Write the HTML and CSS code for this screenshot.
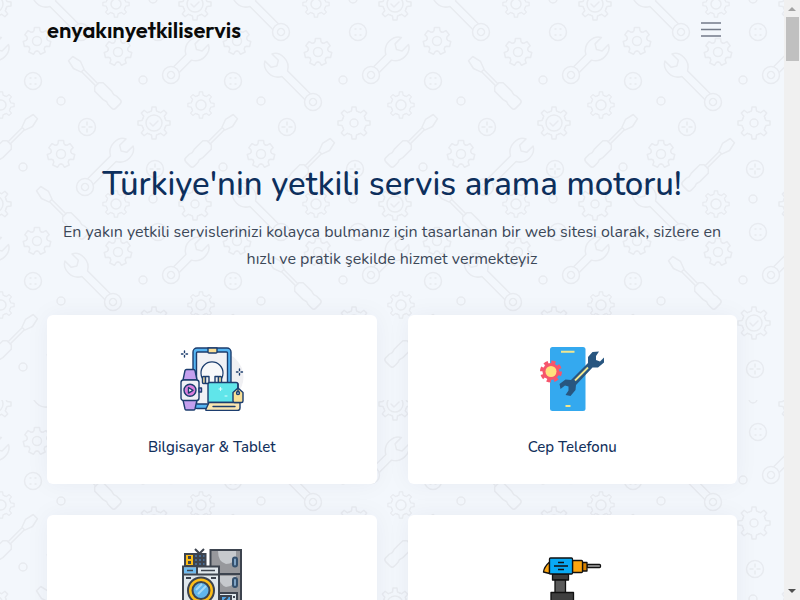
FILE: index.html
```
<!DOCTYPE html>
<html lang="tr">

<head>
    <meta charset="UTF-8">
    <meta name="viewport" content="width=device-width, initial-scale=1.0">
    <title>enyakınyetkiliservis</title>
    <link rel="stylesheet" href="styles.css">
</head>

<body>
    <div class="page">
        <!-- Repeating tools pattern -->
        <svg class="pattern" aria-hidden="true">
            <defs>
                <path id="tooth8" d="M-4.6-11.1L-2.5-12L-2-16H2L2.5-12L4.6-11.1" />
                <path id="tooth7" d="M-4.3-9L-3-10.3L-2.6-13.5H2.6L3-10.3L4.3-9" />
                <g id="gear8">
                    <use href="#tooth8" />
                    <use href="#tooth8" transform="rotate(45)" />
                    <use href="#tooth8" transform="rotate(90)" />
                    <use href="#tooth8" transform="rotate(135)" />
                    <use href="#tooth8" transform="rotate(180)" />
                    <use href="#tooth8" transform="rotate(225)" />
                    <use href="#tooth8" transform="rotate(270)" />
                    <use href="#tooth8" transform="rotate(315)" />
                </g>
                <g id="gear7">
                    <use href="#tooth7" />
                    <use href="#tooth7" transform="rotate(51.43)" />
                    <use href="#tooth7" transform="rotate(102.86)" />
                    <use href="#tooth7" transform="rotate(154.29)" />
                    <use href="#tooth7" transform="rotate(205.71)" />
                    <use href="#tooth7" transform="rotate(257.14)" />
                    <use href="#tooth7" transform="rotate(308.57)" />
                    <circle r="4.5" />
                </g>
                <g id="gearCheck">
                    <use href="#gear8" />
                    <circle r="8" />
                    <path d="M-4 0L-1 3L4-2" />
                </g>
                <g id="gearPlain">
                    <use href="#gear8" />
                    <circle r="4" />
                </g>
                <g id="gearSmall">
                    <use href="#gear8" transform="scale(.82)" />
                    <circle r="5" />
                </g>
                <g id="button">
                    <circle r="8.5" />
                    <path d="M-3-3h1M2-3h1M-3 3h1M2 3h1" />
                </g>
                <g id="screw">
                    <circle r="8.5" />
                    <path d="M0-5v3M0 5v-3M-5 0h3M5 0h-3" />
                </g>
                <g id="wrench">
                    <circle r="8.5" />
                    <circle r="3.5" />
                    <path d="M-4-8V-40Q-11-44-11-52Q-11-60-5-63V-54L0-51L5-54V-63Q11-60 11-52Q11-44 4-40V-8" />
                </g>
                <g id="wrenchShort">
                    <circle r="8.5" />
                    <circle r="3.5" />
                    <path d="M-4-8V-25Q-11-29-11-37Q-11-45-5-48V-39L0-36L5-39V-48Q11-45 11-37Q11-29 4-25V-8" />
                </g>
                <g id="driver">
                    <path d="M-6-3Q-6 0-3 0H3Q6 0 6-3V-8L5-11L6-15V-27L3-30H-3L-6-27V-15L-5-11L-6-8Z" />
                    <path d="M-1.5-30V-50M1.5-30V-50M-2-50L-5-58L-3-67H3L5-58L2-50Z" />
                </g>
                <g id="cell">
                    <use href="#gear7" x="37" y="41" />
                    <use href="#gear7" x="118" y="52" />
                    <use href="#gear7" x="61" y="154" />
                    <use href="#gearSmall" x="116" y="4" />
                    <use href="#gearSmall" x="201" y="105" />
                    <use href="#button" x="33" y="81" />
                    <use href="#button" x="158" y="32" />
                    <use href="#screw" x="87" y="127" />
                    <use href="#screw" x="155" y="169" />
                    <circle cx="61" cy="101" r="4" />
                    <circle cx="143" cy="80" r="4" />
                    <circle cx="23" cy="167" r="4" />
                    <circle cx="153" cy="-1" r="4" />
                    <use href="#wrenchShort" transform="translate(171 75) rotate(45)" />
                    <use href="#driver" transform="translate(188 164) rotate(45)" />
                </g>
                <g id="cellA">
                    <use href="#cell" />
                    <use href="#gearCheck" x="154" y="123" />
                    <use href="#driver" transform="translate(118 106) rotate(-45)" />
                    <use href="#wrench" transform="translate(85 187) rotate(45)" />
                </g>
                <g id="cellB">
                    <use href="#cell" />
                    <use href="#gearPlain" x="154" y="123" />
                    <use href="#wrench" transform="translate(113 102) rotate(-45)" />
                    <use href="#driver" transform="translate(85 188) rotate(45)" />
                </g>
                <pattern id="tools" width="400" height="400" patternUnits="userSpaceOnUse">
                    <g class="tool-lines">
                        <use href="#cellA" x="-200" y="-200" />
                        <use href="#cellB" x="0" y="-200" />
                        <use href="#cellA" x="200" y="-200" />
                        <use href="#cellB" x="-200" y="0" />
                        <use href="#cellA" x="0" y="0" />
                        <use href="#cellB" x="200" y="0" />
                        <use href="#cellA" x="-200" y="200" />
                        <use href="#cellB" x="0" y="200" />
                        <use href="#cellA" x="200" y="200" />
                        <use href="#gearCheck" x="-5" y="4" />
                        <use href="#gearCheck" x="195" y="4" />
                        <use href="#gearCheck" x="395" y="4" />
                        <use href="#gearCheck" x="-5" y="204" />
                        <use href="#gearPlain" x="195" y="204" />
                        <use href="#gearCheck" x="395" y="204" />
                        <use href="#wrench" transform="translate(81 32) rotate(-45)" />
                        <use href="#wrench" transform="translate(281 32) rotate(-45)" />
                        <use href="#driver" transform="translate(86 236) rotate(-45)" />
                        <use href="#wrench" transform="translate(281 232) rotate(-45)" />
                    </g>
                </pattern>
            </defs>
            <rect width="100%" height="100%" fill="url(#tools)" />
        </svg>

        <header class="header">
            <a href="/" class="logo">enyakınyetkiliservis</a>
            <button class="menu-btn" type="button" aria-label="Menü">
                <svg width="20" height="16" viewBox="0 0 20 16">
                    <path d="M0 1h20M0 7.5h20M0 14h20" />
                </svg>
            </button>
        </header>

        <main>
            <section class="hero">
                <h1>Türkiye'nin yetkili servis arama motoru!</h1>
                <p>En yakın yetkili servislerinizi kolayca bulmanız için tasarlanan bir web sitesi olarak, sizlere en
                    hızlı ve pratik şekilde hizmet vermekteyiz</p>
            </section>

            <section class="cards">
                <a href="#bilgisayar" class="card">
                    <svg class="card-icon" viewBox="0 0 64 64" fill="none" stroke="#1c3d6e" stroke-width="1.4" stroke-linejoin="round" stroke-linecap="round">
                        <circle cx="39" cy="30" r="24.5" fill="#f0f0f3" stroke="none" />
                        <rect x="13" y="1" width="38" height="60.5" rx="4" fill="#55b4f2" />
                        <rect x="16.5" y="5" width="31" height="52" rx="1" fill="#f1f1f5" />
                        <path d="M28 1h9v4q0 1-1 1h-7q-1 0-1-1z" fill="#f9dd96" />
                        <path d="M24.500 34a11 11 0 1 1 15 0" fill="#f8f8fa" stroke-width="1.2" />
                        <rect x="22.5" y="29.5" width="3" height="7" rx="1" fill="#f9e3a5" />
                        <rect x="25.5" y="29.5" width="3.5" height="7" fill="#eee" />
                        <rect x="35" y="29.5" width="3.5" height="7" fill="#eee" />
                        <rect x="38.5" y="29.5" width="3" height="7" rx="1" fill="#f9e3a5" />
                        <path d="M3 33L5 23.5Q5.3 22.5 6.5 22.5H13.5Q14.7 22.5 15 23.5L17 33ZM3 53L5 62Q5.300 63 6.500 63H13.500Q14.700 63 15 62L17 53Z" fill="#c5a0ee" />
                        <rect x="1" y="33" width="18" height="20.5" rx="2.5" fill="#f0f0f6" />
                        <rect x="19" y="41" width="2.5" height="4" fill="#c5a0ee" />
                        <circle cx="10" cy="43.3" r="6" fill="#da7edd" />
                        <path d="M8.500 40.500v5.600l4.500-2.800z" fill="#fff" />
                        <path d="M28 55.500V37.500Q28 35.500 30 35.500H56Q58 35.500 58 37.500V55.500Z" fill="#60e5ea" />
                        <path d="M39 42h3M40.500 40.500v3M45 49h2" stroke="#d9ffff" stroke-width="1" />
                        <path d="M29 55.500H60V61Q60 63.500 57.500 63.500H26.500Q25.500 63.500 26 62Z" fill="#fae5b0" />
                        <path d="M33 59.5H55" />
                        <path d="M58 41l5 4.5V54q0 1.5-1.5 1.5h-7q-1.5 0-1.5-1.5V45.5z" fill="#fae096" />
                        <circle cx="58" cy="46" r="1.5" fill="#fff" />
                        <path d="M58 37v8" />
                        <path d="M4.500 4v1.500M4.500 8.500V10M1.500 7H3M6 7h1.500M59.500 22v1.500M59.500 26.500V28M56.500 25H58M61 25h1.500" />
                    </svg>
                    <span>Bilgisayar &amp; Tablet</span>
                </a>

                <a href="#cep-telefonu" class="card">
                    <svg class="card-icon" viewBox="0 0 64 64">
                        <rect x="10" y="0" width="35.5" height="64" rx="2.5" fill="#34a9ef" />
                        <path d="M21 4.800H34.500M25.500 59H30.500" stroke="#f2e78f" stroke-width="2" />
                        <circle cx="11" cy="24.5" r="8.5" fill="#f6566c" />
                        <circle cx="11" cy="24.5" r="9" fill="none" stroke="#f6566c" stroke-width="4" stroke-dasharray="4 3.07" />
                        <circle cx="11" cy="24.5" r="5.5" fill="#ffe07c" />
                        <path d="M52.500 5L59 4.500L56 9V13L60 14.500L64 10.500V15.500L58 20.500L52.500 20.500L36 38L35.500 43L30.500 49L25.500 48L28.500 43.500V39.500L25 38.500L20.500 42L19.500 37L25.500 32.500L31 33L48 16L48 10Z" fill="#285680" />
                        <path d="M35 33.5L48 20.5" stroke="#f2e78f" stroke-width="1.8" />
                    </svg>
                    <span>Cep Telefonu</span>
                </a>

                <a href="#beyaz-esya" class="card" aria-label="Beyaz Eşya">
                    <svg class="card-icon" viewBox="0 0 64 64" fill="none" stroke="#3d444f" stroke-width="2">
                        <rect x="30.5" y="3" width="30.5" height="65" fill="#97989c" />
                        <path d="M38 4H56V10Q54 17 46 17Q38 15 38 4ZM38 29H56Q55 40 46 40Q40 38 38 29Z" fill="#c6c9cd" stroke="none" />
                        <path d="M30.5 27H61" />
                        <rect x="53" y="10.5" width="4" height="9" rx="2" stroke="#34506d" fill="#7fa3c4" />
                        <rect x="53" y="31" width="4" height="9" rx="2" stroke="#34506d" fill="#7fa3c4" />
                        <rect x="5" y="7" width="9" height="12" fill="#fdbd17" />
                        <path d="M9.500 9v8" stroke-width="3" stroke-dasharray="3 2" />
                        <rect x="14" y="7" width="11.5" height="12" fill="#466a91" />
                        <path d="M18 7v12M22 7v12M14 11h11M14 15h11M15 2l4.500 4.500L24 2" />
                        <rect x="39" y="46" width="18" height="22" fill="#dfe7ec" />
                        <rect x="41" y="49" width="10" height="8" fill="#53a7e8" />
                        <path d="M43 55l5-5M54 49v2M54 53v2" />
                        <rect x="3" y="19.5" width="36" height="48" fill="#e1e8ed" />
                        <rect x="4" y="20.5" width="12" height="6" fill="#72bdf1" stroke="none" />
                        <path d="M7 23.500h6M21 23.500h14" stroke-width="1.500" stroke-dasharray="6 0" />
                        <path d="M3 27.500H39M17 19v8M6 31h5M31 31h5" />
                        <circle cx="21" cy="43.5" r="13" fill="#fdbd17" />
                        <circle cx="21" cy="43.5" r="8.5" fill="#61b5ed" />
                        <path d="M16 43l6-6M18 47l8-8" stroke="#a4d8f5" />
                    </svg>
                </a>

                <a href="#elektrikli-aletler" class="card" aria-label="Elektrikli Aletler">
                    <svg class="card-icon" viewBox="0 0 64 64" stroke="#111" stroke-width="1.3" stroke-linejoin="round">
                        <path d="M9.500 15Q4 20 3.500 25L9.500 26.500Z" fill="#fca50f" />
                        <rect x="47" y="17.5" width="13.5" height="3" rx="1" fill="#aaa" />
                        <rect x="42.5" y="15.5" width="4.5" height="8.5" fill="#d98200" />
                        <rect x="32.5" y="13.5" width="10" height="12" rx="1" fill="#fca50f" />
                        <rect x="12.5" y="27" width="16" height="6" fill="#3b3b3b" />
                        <rect x="15" y="33" width="10.5" height="13" fill="#5a5a5a" />
                        <rect x="11" y="45.5" width="22.5" height="10.5" fill="#3f3f3f" />
                        <rect x="9.5" y="11" width="23" height="16" rx="1" fill="#09aaf4" />
                        <path d="M18 15.500h6M14 19h14M18 22.500h6" />
                    </svg>
                </a>
            </section>
        </main>
    </div>

    <div class="scrollbar" aria-hidden="true">
        <span class="arrow arrow-up"></span>
        <span class="thumb"></span>
        <span class="arrow arrow-down"></span>
    </div>
</body>

</html>
```
FILE: styles.css
```
* {
    box-sizing: border-box;
}

body {
    margin: 0;
    display: flex;
    height: 100vh;
    overflow: hidden;
    font-family: Nunito, Lato, sans-serif;
    color: #3c4858;
}

.page {
    flex: 1;
    position: relative;
    overflow: hidden;
    background-color: #f3f7fc;
}

.pattern {
    position: absolute;
    inset: 0;
    width: 100%;
    height: 100%;
}

.tool-lines {
    fill: none;
    stroke: #e8ebf0;
    stroke-width: 1.5px;
    stroke-linejoin: round;
    stroke-linecap: round;
}

.header,
main {
    position: relative;
    padding: 0 47px;
}

.header {
    height: 60px;
    display: flex;
    align-items: center;
    justify-content: space-between;
}

.logo {
    font-family: Gilroy, Outfit, Urbanist, Montserrat, sans-serif;
    font-size: 22px;
    font-weight: 600;
    color: #0a0a0a;
    text-decoration: none;
}

.menu-btn {
    display: flex;
    margin-right: 16px;
    padding: 0;
    border: none;
    background: none;
    cursor: pointer;
}

.menu-btn path {
    stroke: #747b89;
    stroke-width: 1.5px;
}

.hero {
    padding-top: 105px;
    text-align: center;
}

.hero h1 {
    margin: 0 0 14px;
    font-size: 33px;
    line-height: 40px;
    font-weight: 500;
    color: #0d2f5c;
}

.hero p {
    margin: 0;
    font-size: 16px;
    line-height: 27px;
    font-weight: 400;
}

.cards {
    margin-top: 42px;
    display: grid;
    grid-template-columns: 1fr 1fr;
    gap: 31px;
}

.card {
    display: flex;
    flex-direction: column;
    align-items: center;
    gap: 26px;
    padding: 32px 16px 26px;
    background-color: #fff;
    border-radius: 6px;
    box-shadow: 0 0 24px rgba(20, 40, 80, 0.05);
    font-size: 15px;
    line-height: 21px;
    font-weight: 500;
    color: #12305c;
    text-decoration: none;
}

.card-icon {
    width: 64px;
    height: 64px;
}

.scrollbar {
    width: 16px;
    display: flex;
    flex-direction: column;
    align-items: center;
    background-color: #f0f0f0;
}

.thumb {
    width: 13px;
    height: 44px;
    margin: 6px 0 auto;
    background-color: #c0c0c0;
}

.arrow {
    border: 4px solid transparent;
}

.arrow-up {
    margin-top: 3px;
    border-bottom-color: #a3a3a3;
}

.arrow-down {
    margin-bottom: 3px;
    border-top-color: #505050;
}
```
